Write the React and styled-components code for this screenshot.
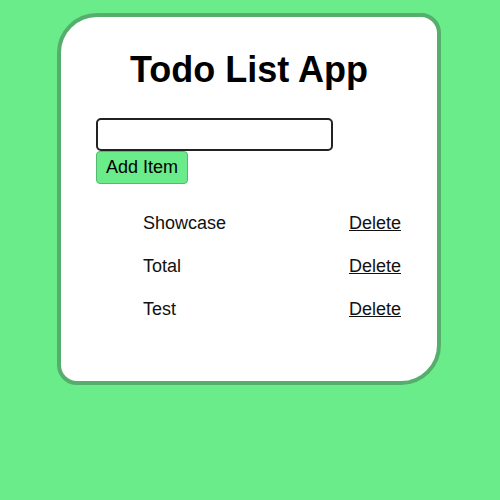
import React, { useState } from "react";
import styled, { createGlobalStyle } from "styled-components";

const Global = createGlobalStyle`
  html, body {
    margin: 0;
    padding: 0;
    background: #6bec8b;
    font-family: "Liberation Sans", Arial, sans-serif;
    width: 500px;
    height: 500px;
  }
`;

const Page = styled.div`
  width: 500px;
  height: 500px;
  padding-top: 13px;
  box-sizing: border-box;
`;

const Card = styled.div`
  width: 384px;
  height: 372px;
  margin-left: 57px;
  box-sizing: border-box;
  background: #ffffff;
  border: 4px solid #55ae6c;
  border-radius: 40px 20px 40px 20px;
  padding: 32px 35px 0 35px;
`;

const Title = styled.h1`
  margin: 0;
  font-size: 36px;
  line-height: 41.4px;
  font-weight: bold;
  text-align: center;
  color: #000;
`;

const Form = styled.form`
  display: flex;
  flex-direction: column;
  align-items: flex-start;
  margin-top: 27.5px;
`;

const Input = styled.input`
  width: 237px;
  height: 33px;
  box-sizing: border-box;
  border: 2px solid #222;
  border-radius: 5px;
  font-family: inherit;
  font-size: 18px;
  padding: 0 6px;
  outline: none;
`;

const AddButton = styled.button`
  height: 33px;
  box-sizing: border-box;
  padding: 0 9px;
  background: #6bec8b;
  border: 1px solid #55b86e;
  border-radius: 4px;
  font-family: inherit;
  font-size: 18px;
  color: #000;
  cursor: pointer;
`;

const List = styled.ul`
  list-style: none;
  margin: 28.7px 0 0 0;
  padding: 0 0 0 47px;
  width: 258px;
`;

const Row = styled.li`
  display: flex;
  justify-content: space-between;
  align-items: center;
  height: 20.7px;
  font-size: 18px;
  line-height: 20.7px;
  color: #111;
  & + & {
    margin-top: 22.6px;
  }
`;

const DeleteLink = styled.button`
  background: none;
  border: none;
  padding: 0;
  font-family: inherit;
  font-size: 18px;
  line-height: 20.7px;
  color: #111;
  text-decoration: underline;
  cursor: pointer;
`;

export default function App() {
  const [items, setItems] = useState(["Showcase", "Total", "Test"]);
  const [text, setText] = useState("");
  const add = (e) => {
    e.preventDefault();
    if (text.trim()) {
      setItems([...items, text.trim()]);
      setText("");
    }
  };
  return (
    <Page>
      <Global />
      <Card>
        <Title>Todo List App</Title>
        <Form onSubmit={add}>
          <Input value={text} onChange={(e) => setText(e.target.value)} />
          <AddButton type="submit">Add Item</AddButton>
        </Form>
        <List>
          {items.map((it, i) => (
            <Row key={i}>
              <span>{it}</span>
              <DeleteLink onClick={() => setItems(items.filter((_, j) => j !== i))}>
                Delete
              </DeleteLink>
            </Row>
          ))}
        </List>
      </Card>
    </Page>
  );
}
